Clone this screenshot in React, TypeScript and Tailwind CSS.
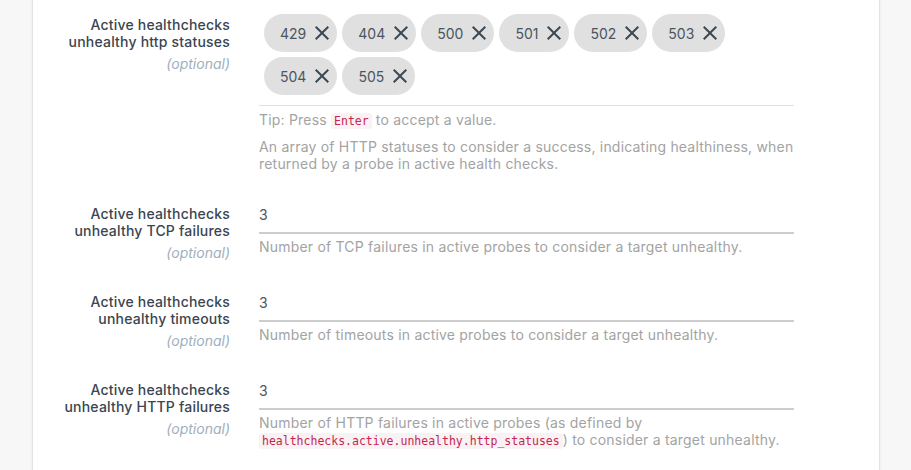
import React from 'react'
import { MdClose } from 'react-icons/md'

const font = { fontFamily: 'Inter, "Noto Sans", sans-serif' }

// Label column shared by all rows
const FieldLabel: React.FC<{ lines: string[]; top: string }> = ({ lines, top }) => (
  <div className={`w-[197px] shrink-0 text-right ${top}`}>
    {lines.map((l) => (
      <div key={l} className="text-[14px] leading-[17px] font-medium tracking-[0.2px] text-[#3a4550]">
        {l}
      </div>
    ))}
    <div className="mt-[5px] text-[14px] leading-[17px] italic text-[#9db0c0]">(optional)</div>
  </div>
)

const Code: React.FC<{ children: React.ReactNode }> = ({ children }) => (
  <code
    className="rounded-[3px] bg-[#f9f2f4] px-[3px] py-[1px] text-[11.5px] tracking-normal text-[#c7254e]"
    style={{ fontFamily: '"DejaVu Sans Mono", "Liberation Mono", monospace' }}
  >
    {children}
  </code>
)

const Chip: React.FC<{ value: string }> = ({ value }) => (
  <div className="flex h-[38px] items-center rounded-full bg-[#e0e0e0] pl-[16px] pr-[3px]">
    <span className="text-[14px] text-[#4a5560]">{value}</span>
    <MdClose size={24} className="ml-[4px] text-[#3c4852]" />
  </div>
)

const NumberField: React.FC<{ label: string[]; value: string; children: React.ReactNode }> = ({
  label,
  value,
  children,
}) => (
  <div className="flex">
    <FieldLabel lines={label} top="pt-[7px]" />
    <div className="ml-[29px] w-[535px]">
      <div className="flex h-[36px] items-end border-b-2 border-[#cdcdcd] pb-[9px]">
        <span className="text-[14px] leading-[17px] text-[#4a5560]">{value}</span>
      </div>
      <div className="mt-[4px] text-[14px] leading-[17px] tracking-[0.2px] text-[#a3a3a3]">{children}</div>
    </div>
  </div>
)

export default function App() {
  const statuses = ['429', '404', '500', '501', '502', '503', '504', '505']

  return (
    <div className="h-[470px] overflow-hidden bg-[#f7f7f7] pl-[32px]" style={font}>
      <div className="h-full w-[848px] border-x border-[#e4e4e4] bg-white pt-[14px] shadow-[0_0_3px_rgba(0,0,0,0.06)]">
        <div className="flex flex-col gap-[25px]">
          {/* Status chips field */}
          <div className="flex pb-[1px]">
            <FieldLabel lines={['Active healthchecks', 'unhealthy http statuses']} top="pt-[2px]" />
            <div className="ml-[29px] w-[535px]">
              <div className="flex flex-wrap gap-[5px] border-b border-[#e0e0e0] pb-[10px] pl-[5px]">
                {statuses.map((s) => (
                  <Chip key={s} value={s} />
                ))}
              </div>
              <div className="mt-[5px] text-[14px] leading-[17px] tracking-[0.2px] text-[#a3a3a3]">
                Tip: Press <Code>Enter</Code> to accept a value.
              </div>
              <div className="mt-[8px] text-[14px] leading-[17px] tracking-[0.2px] text-[#a3a3a3]">
                An array of HTTP statuses to consider a success, indicating healthiness, when returned by a probe in
                active health checks.
              </div>
            </div>
          </div>

          <NumberField label={['Active healthchecks', 'unhealthy TCP failures']} value="3">
            Number of TCP failures in active probes to consider a target unhealthy.
          </NumberField>

          <NumberField label={['Active healthchecks', 'unhealthy timeouts']} value="3">
            Number of timeouts in active probes to consider a target unhealthy.
          </NumberField>

          <NumberField label={['Active healthchecks', 'unhealthy HTTP failures']} value="3">
            Number of HTTP failures in active probes (as defined by{' '}
            <Code>healthchecks.active.unhealthy.http_statuses</Code>) to consider a target unhealthy.
          </NumberField>
        </div>
      </div>
    </div>
  )
}
